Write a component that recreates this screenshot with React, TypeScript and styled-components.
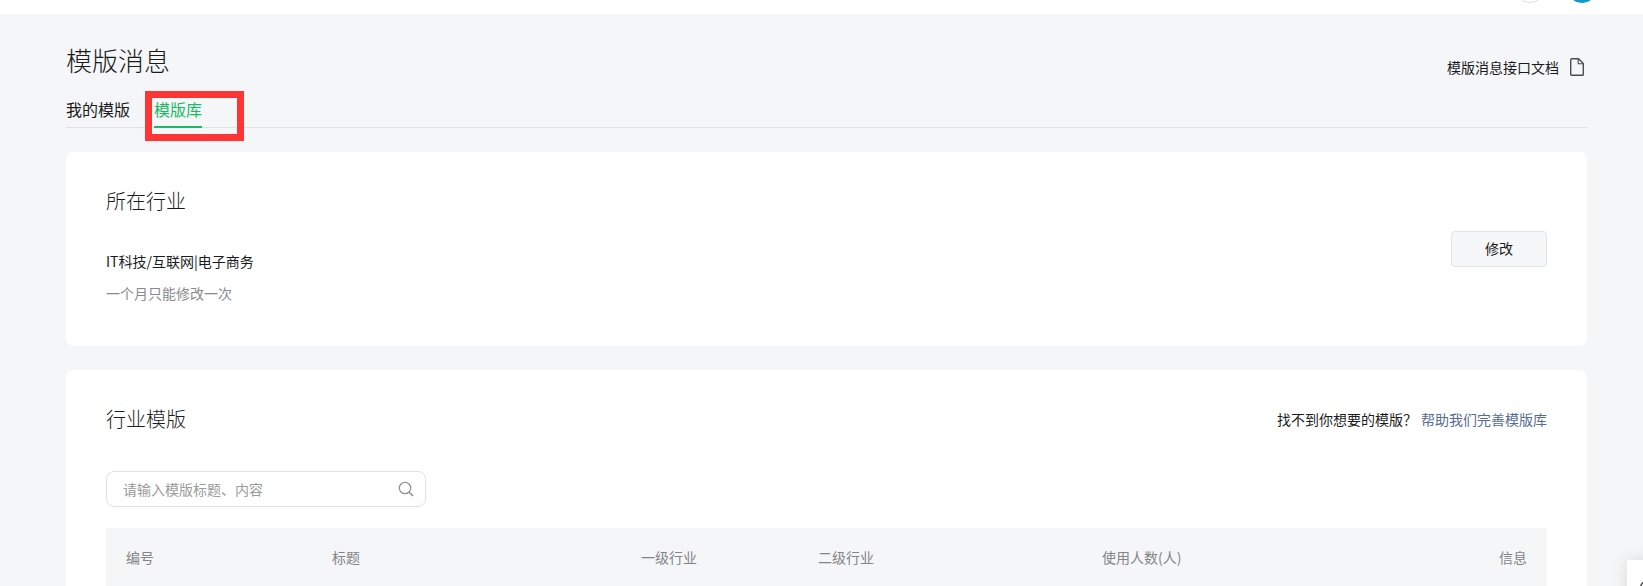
import React from "react";
import styled, { createGlobalStyle } from "styled-components";

const GlobalStyle = createGlobalStyle`
  * { box-sizing: border-box; }
  body {
    margin: 0;
    background: #f4f6f8;
    color: #1a1b1c;
    font: 14px/22px "Noto Sans CJK SC", sans-serif;
    font-weight: 400;
  }
  button, input { font: inherit; color: inherit; }
`;

const Page = styled.div`
  position: relative;
  height: 100vh;
  overflow: hidden;
`;

const TopBar = styled.header`
  display: flex;
  justify-content: flex-end;
  align-items: flex-end;
  gap: 20px;
  height: 14px;
  padding: 0 45px 11px;
  overflow: hidden;
  background: #fff;
`;

const RoundMark = styled.span<{ $fill: string; $line: string }>`
  flex: none;
  width: 32px;
  height: 32px;
  border: 1px solid ${(p) => p.$line};
  border-radius: 50%;
  background: ${(p) => p.$fill};
`;

const Main = styled.main`
  display: flex;
  flex-direction: column;
  padding: 24px 56px 0 66px;
`;

const TitleRow = styled.div`
  display: flex;
  justify-content: space-between;
  align-items: center;
  margin-bottom: 2px;
`;

const Title = styled.h1`
  margin: 0;
  font-size: 26px;
  line-height: 44px;
  font-weight: 300;
`;

const DocLink = styled.a`
  display: flex;
  align-items: center;
  gap: 8px;
  padding-top: 14px;
  color: inherit;
  text-decoration: none;
`;

const Tabs = styled.nav`
  display: flex;
  gap: 24px;
  margin-bottom: 24px;
  border-bottom: 1px solid #dfe1e4;
`;

const Tab = styled.a<{ $active?: boolean }>`
  position: relative;
  padding: 12px 0 4px;
  margin-bottom: -1px;
  border-bottom: 2px solid ${(p) => (p.$active ? "#1aba64" : "transparent")};
  color: ${(p) => (p.$active ? "#1aba64" : "inherit")};
  font-size: 16px;
  line-height: 26px;
  text-decoration: none;
`;

const Highlight = styled.span`
  position: absolute;
  left: -9px;
  top: 7px;
  width: 99px;
  height: 50px;
  border: 7px solid #fd3635;
  pointer-events: none;
`;

const Panel = styled.section`
  padding: 32px 40px;
  margin-bottom: 24px;
  border-radius: 8px;
  background: #fff;
`;

const PanelHead = styled.div`
  display: flex;
  justify-content: space-between;
  align-items: center;
  margin-bottom: 35px;
`;

const Heading = styled.h2`
  margin: 0;
  font-size: 20px;
  line-height: 34px;
  font-weight: 300;
`;

const Industry = styled.div`
  display: flex;
  justify-content: space-between;
  align-items: center;
`;

const Text = styled.p<{ $muted?: boolean }>`
  margin: 0 0 10px;
  color: ${(p) => (p.$muted ? "#888a8c" : "inherit")};
`;

const Details = styled.div`
  display: flex;
  flex-direction: column;
`;

const IndustryHeading = styled(Heading)`
  margin-bottom: 32px;
`;

const Button = styled.button`
  width: 96px;
  height: 36px;
  padding: 0 0 2px;
  border: 1px solid #e1e4e6;
  border-radius: 4px;
  background: #f5f7f8;
`;

const Help = styled.div`
  display: flex;
  gap: 4px;
`;

const HelpLink = styled.a`
  color: #576b95;
  text-decoration: none;
`;

const SearchBox = styled.label`
  display: flex;
  align-items: center;
  width: 320px;
  height: 36px;
  margin-bottom: 21px;
  padding: 0 11px 0 16px;
  border: 1px solid #dfe2e4;
  border-radius: 8px;
`;

const SearchInput = styled.input`
  flex: 1;
  min-width: 0;
  padding: 0;
  border: 0;
  outline: 0;
  background: none;
  &::placeholder { color: #999b9d; opacity: 1; }
`;

const Table = styled.table`
  width: 100%;
  table-layout: fixed;
  border-collapse: collapse;
  background: #f5f6f8;
  color: #838587;
`;

const HeadCell = styled.th<{ $width?: number; $end?: boolean }>`
  width: ${(p) => (p.$width ? `${p.$width}px` : "auto")};
  height: 60px;
  padding: 0 20px 2px;
  font-weight: 400;
  text-align: ${(p) => (p.$end ? "right" : "left")};
`;

const SupportButton = styled.button`
  position: absolute;
  right: -32px;
  bottom: -22px;
  width: 48px;
  height: 48px;
  padding: 15px 12px 0;
  border: 0;
  background: #fff;
  box-shadow: 0 0 16px rgba(0, 0, 0, 0.12);
`;

const columns = [
  { label: "编号", width: 206 },
  { label: "标题", width: 309 },
  { label: "一级行业", width: 177 },
  { label: "二级行业", width: 284 },
  { label: "使用人数(人)", width: 240 },
  { label: "信息", end: true },
];

const DocumentIcon = () => (
  <svg width="20" height="20" viewBox="0 0 20 20" fill="none" stroke="#4b4d4f" strokeWidth="1.4" strokeLinejoin="round" aria-hidden="true">
    <path d="M4.6 1.7h7l4.7 4.7v11a.9.9 0 0 1-.9.9H4.6a.9.9 0 0 1-.9-.9V2.6a.9.9 0 0 1 .9-.9Z" />
    <path d="M11.2 2v4.8h4.8" strokeWidth="1.1" />
  </svg>
);

const SearchIcon = () => (
  <svg width="16" height="16" viewBox="0 0 16 16" fill="none" stroke="#929496" strokeWidth="1.3" aria-hidden="true">
    <circle cx="7" cy="7" r="5.7" />
    <path d="M11 11l4 4" strokeWidth="1.7" />
  </svg>
);

const SupportIcon = () => (
  <svg width="24" height="24" viewBox="0 0 24 24" fill="none" stroke="#444" strokeWidth="1.4" aria-hidden="true">
    <circle cx="12" cy="13" r="11" />
  </svg>
);

export default function App() {
  return (
    <Page>
      <GlobalStyle />
      <TopBar>
        <RoundMark $fill="#fff" $line="#dcdddf" />
        <RoundMark $fill="#099bce" $line="#099bce" />
      </TopBar>
      <Main>
        <TitleRow>
          <Title>模版消息</Title>
          <DocLink href="#docs">
            模版消息接口文档
            <DocumentIcon />
          </DocLink>
        </TitleRow>
        <Tabs>
          <Tab href="#mine">我的模版</Tab>
          <Tab href="#library" $active aria-current="page">
            模版库
            <Highlight />
          </Tab>
        </Tabs>
        <Panel>
          <Industry>
            <Details>
              <IndustryHeading>所在行业</IndustryHeading>
              <Text>IT科技/互联网|电子商务</Text>
              <Text $muted>一个月只能修改一次</Text>
            </Details>
            <Button type="button">修改</Button>
          </Industry>
        </Panel>
        <Panel>
          <PanelHead>
            <Heading>行业模版</Heading>
            <Help>
              <span>找不到你想要的模版？</span>
              <HelpLink href="#improve">帮助我们完善模版库</HelpLink>
            </Help>
          </PanelHead>
          <SearchBox>
            <SearchInput type="text" placeholder="请输入模版标题、内容" aria-label="请输入模版标题、内容" />
            <SearchIcon />
          </SearchBox>
          <Table>
            <thead>
              <tr>
                {columns.map((c) => (
                  <HeadCell key={c.label} scope="col" $width={c.width} $end={c.end}>
                    {c.label}
                  </HeadCell>
                ))}
              </tr>
            </thead>
          </Table>
        </Panel>
      </Main>
      <SupportButton type="button" aria-label="客服">
        <SupportIcon />
      </SupportButton>
    </Page>
  );
}
